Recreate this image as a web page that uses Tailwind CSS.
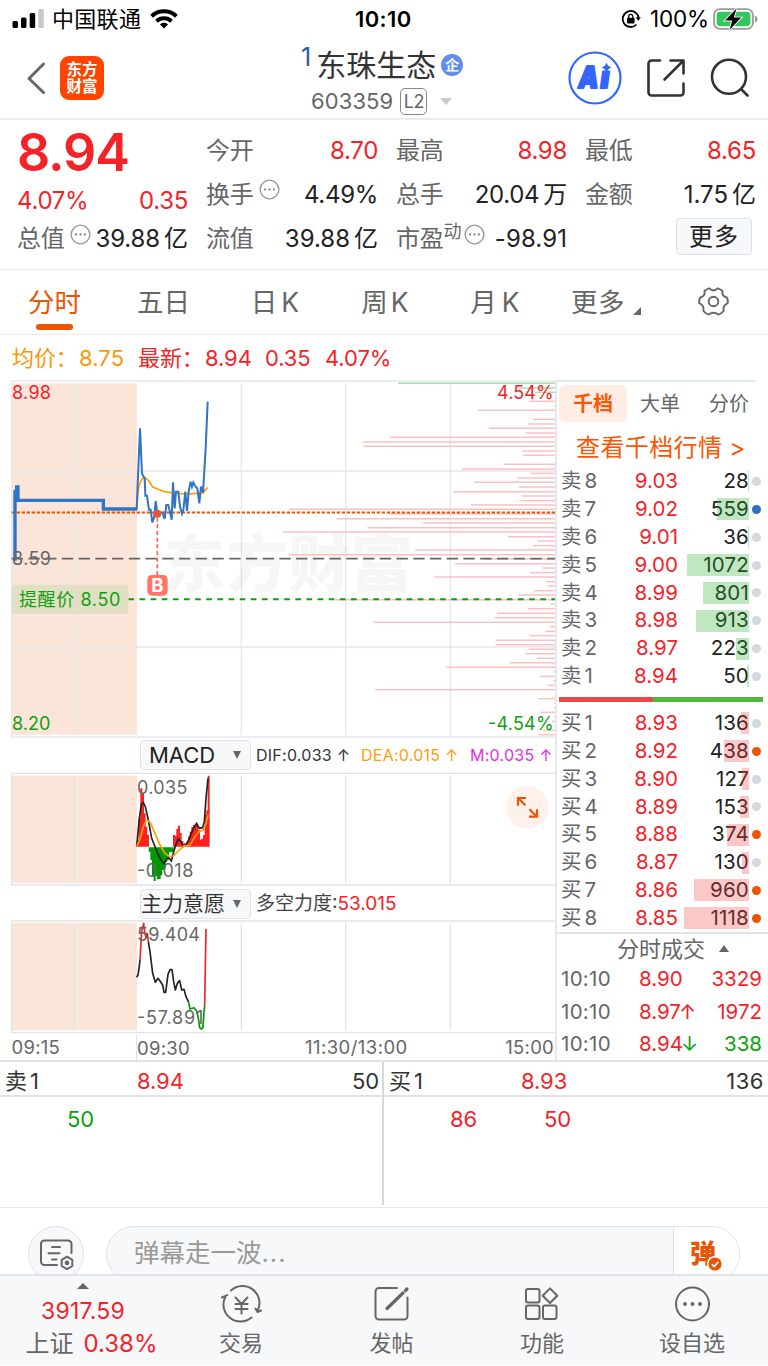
<!DOCTYPE html>
<html lang="zh-CN">
<head>
    <meta charset="utf-8" />
    <title>东珠生态 603359</title>
    <meta name="viewport" content="width=device-width, initial-scale=1.0">
    <script src="https://cdn.jsdelivr.net/npm/@tailwindcss/browser@4"></script>
</head>
<body class="w-[768px] h-[1366px] overflow-hidden bg-white font-['Inter','Noto_Sans_CJK_SC',sans-serif] text-[#666]">

<!-- Shared icons -->
<svg class="hidden">
    <symbol id="dots" viewBox="0 0 22 22">
        <circle cx="11" cy="11" r="9.8" fill="none" stroke="#9a9a9a" stroke-width="1.5"/>
        <circle cx="6.4" cy="11" r="1.2" fill="#888"/><circle cx="11" cy="11" r="1.2" fill="#888"/><circle cx="15.6" cy="11" r="1.2" fill="#888"/>
    </symbol>
</svg>

<!-- Status bar -->
<div class="flex h-[38px] items-center text-black">
    <div class="flex w-[355px] items-center pl-[12px]">
        <svg class="h-[20px] w-[33px]" viewBox="0 0 33 20">
            <rect x="0.5" y="12" width="5.5" height="7" rx="1.6"/><rect x="9" y="8.5" width="5.5" height="10.5" rx="1.6"/><rect x="17.7" y="4" width="5.5" height="15" rx="1.6"/><rect x="26.3" y="0" width="5.5" height="19" rx="1.6" fill="#c8c8c8"/>
        </svg>
        <span class="ml-[7px] text-[22px] leading-none tracking-[0.3px]">中国联通</span>
        <svg class="ml-[9px] h-[20px] w-[28px]" viewBox="0 0 28 20" fill="none" stroke="#000" stroke-width="4">
            <path d="M1.6 7.2C8.6 .7 19.4 .7 26.4 7.2"/><path d="M6.5 12.2c4.300-3.900 10.700-3.900 15 0"/><path d="M14 19.600l-4.200-4.300c2.500-2.100 5.900-2.100 8.400 0z" fill="#000" stroke="none"/>
        </svg>
    </div>
    <span class="w-[266px] text-[22px] font-semibold tracking-[0.4px]">10:10</span>
    <svg class="h-[20px] w-[20px]" viewBox="0 0 20 20" fill="none" stroke="#000" stroke-width="1.8">
        <path d="M17.6 8.700A8 8 0 1 0 15.500 15.500"/><path d="M14.800 8.200h5l-2.500 3.800z" fill="#000" stroke="none"/>
        <rect x="6" y="8.800" width="7.600" height="5.600" rx=".8" fill="#000" stroke="none"/><path d="M7.700 9V7.500a2.100 2.100 0 0 1 4.200 0V9" stroke-width="1.300"/>
    </svg>
    <span class="ml-[9px] w-[63px] whitespace-nowrap text-[22.500px] tracking-[-0.2px]">100%</span>
    <svg class="h-[24px] w-[46px]" viewBox="0 0 46 24">
        <rect x="1" y="2.200" width="39" height="19.600" rx="6" fill="none" stroke="#9b9b9b" stroke-width="1.800"/>
        <rect x="3.600" y="4.800" width="33.800" height="14.400" rx="3.600" fill="#35c759"/>
        <path d="M42 8.500c3.300 1 3.300 6 0 7z" fill="#9b9b9b"/>
        <path d="M23.500 1.500L12 13.500h7.200l-2.700 9.500 11.700-12.400h-7.400z" fill="#000" stroke="#fff" stroke-width="1.800" paint-order="stroke"/>
    </svg>
</div>

<!-- Title bar -->
<header class="flex h-[82px] border-b-2 border-[#ebebed]">
    <div class="flex w-[301px] items-center pl-[26px]">
        <svg class="h-[34px] w-[20px]" viewBox="0 0 20 34" fill="none" stroke="#666" stroke-width="3" stroke-linecap="round" stroke-linejoin="round"><path d="M17.500 3L3 17.500 17.500 31.500"/></svg>
        <div class="ml-[14px] flex h-[44px] w-[44px] flex-col items-center justify-center rounded-[9px] bg-[#ff4400] text-[15.500px] leading-[17.500px] font-bold text-white"><span>东方</span><span>财富</span></div>
    </div>
    <div class="w-[267px]">
        <div class="flex h-[48px] items-center pt-[5px]">
            <span class="mt-[-14px] text-[25px] leading-none text-[#2b5aa8]">1</span>
            <span class="ml-[5px] text-[30px] leading-none text-[#333]">东珠生态</span>
            <span class="ml-[5px] mt-[1px] flex h-[22px] w-[22px] items-center justify-center rounded-full bg-[#5f8de9] text-[14px] leading-none font-bold text-white">企</span>
        </div>
        <div class="flex items-center pl-[10px]">
            <span class="text-[22px] leading-[30px] tracking-[0.1px]">603359</span>
            <span class="ml-[7px] flex h-[27px] w-[27px] items-center justify-center rounded-[5px] border-[1.500px] border-[#888] pt-px text-[18px] leading-none tracking-[-0.5px]">L2</span>
            <span class="ml-[13px] border-x-[6.500px] border-t-[7px] border-x-transparent border-t-[#c9c9c9]"></span>
        </div>
    </div>
    <div class="flex items-center">
        <svg class="h-[54px] w-[54px]" viewBox="0 0 54 54">
            <circle cx="27" cy="27" r="25.500" fill="none" stroke="#3366ff" stroke-width="2.200"/>
            <g transform="translate(5 0) skewX(-8)" font-size="30" font-weight="900" fill="#3366ff" stroke="#3366ff" stroke-width="2.200" stroke-linejoin="round">
                <text x="9.500" y="37" textLength="20" lengthAdjust="spacingAndGlyphs">A</text><text x="31.500" y="37">ı</text>
            </g>
            <path d="M38.500 11.500q1.200 4 5 5-3.800 1-5 5-1.200-4-5-5 3.800-1 5-5z" fill="#3366ff"/>
        </svg>
        <svg class="ml-[24px] h-[40px] w-[40px]" viewBox="0 0 40 40" fill="none" stroke="#333" stroke-width="2.600" stroke-linecap="round" stroke-linejoin="round"><path d="M14 2.500H5.500a3 3 0 0 0-3 3V34.500a3 3 0 0 0 3 3H34.500a3 3 0 0 0 3-3V25.500M18.500 21.500L37 3M24.500 2.500H37.500V15.500"/></svg>
        <svg class="ml-[24px] h-[40px] w-[42px]" viewBox="0 0 42 40" fill="none" stroke="#333" stroke-width="2.600" stroke-linecap="round"><circle cx="19" cy="18.800" r="17"/><path d="M31 31l6.500 6.500"/></svg>
    </div>
</header>

<!-- Quote summary -->
<section class="flex h-[150px] gap-[18px] border-b border-[#ebebed] pr-[12px] pl-[18px] pt-[9px] text-[24px] leading-[44px] tracking-[-0.3px]">
    <div class="w-[171px] pr-[1px]">
        <div class="ml-[-1px] h-[50px] pt-px text-[52px] leading-[46px] font-semibold tracking-[-1.100px] text-[#f52228]">8.94</div>
        <div class="flex h-[44px] justify-between text-[#f52228]"><span class="ml-[-1px]">4.07%</span><span>0.35</span></div>
        <div class="mt-[-6px] flex h-[44px] items-center text-[#222]"><span class="ml-[-1px] text-[#666]">总值</span><svg class="ml-[6px] mt-[-10px] h-[21px] w-[21px]"><use href="#dots"/></svg><span class="ml-auto whitespace-nowrap tracking-[-0.1px]">39.88<span class="ml-[4px]">亿</span></span></div>
    </div>
    <div class="w-[171px] text-[#222]">
        <div class="flex justify-between"><span class="ml-[-1px] text-[#666]">今开</span><span class="text-[#f52228]">8.70</span></div>
        <div class="flex items-center"><span class="ml-[-1px] text-[#666]">换手</span><svg class="ml-[6px] mt-[-11px] h-[21px] w-[21px]"><use href="#dots"/></svg><span class="ml-auto">4.49%</span></div>
        <div class="flex justify-between"><span class="ml-[-1px] text-[#666]">流值</span><span class="tracking-[0px]">39.88<span class="ml-[4px]">亿</span></span></div>
    </div>
    <div class="w-[171px] text-[#222]">
        <div class="flex justify-between"><span class="text-[#666]">最高</span><span class="text-[#f52228]">8.98</span></div>
        <div class="flex justify-between"><span class="text-[#666]">总手</span><span>20.04<span class="ml-[4px]">万</span></span></div>
        <div class="flex items-center"><span class="text-[#666]">市盈</span><span class="mt-[-14px] h-[44px] text-[18px] text-[#666]">动</span><svg class="ml-[3px] mt-[-10px] h-[21px] w-[21px]"><use href="#dots"/></svg><span class="ml-auto tracking-[0.1px]">-98.91</span></div>
    </div>
    <div class="w-[171px] text-[#222]">
        <div class="flex justify-between"><span class="text-[#666]">最低</span><span class="text-[#f52228]">8.65</span></div>
        <div class="flex justify-between"><span class="text-[#666]">金额</span><span class="tracking-[0px]">1.75<span class="ml-[4px]">亿</span></span></div>
        <button class="mt-[1px] ml-auto mr-[4px] flex h-[37px] w-[76px] items-center justify-center rounded-[4px] border border-[#dcdfe6] bg-[#f7f8fa] pt-px tracking-[1px]">更多</button>
    </div>
</section>

<!-- Period tabs -->
<nav class="flex h-[65px] border-b border-[#ebebed] text-[26.500px] leading-[64px]">
    <div class="flex w-[109px] flex-col items-center text-[#ea5504]"><span class="h-[54px]">分时</span><span class="h-[6px] w-[37px] rounded-full bg-[#ea5504]"></span></div>
    <div class="w-[109px] text-center">五日</div>
    <div class="w-[114px] text-center">日<span class="ml-[4px]">K</span></div>
    <div class="w-[106px] text-center">周<span class="ml-[3px]">K</span></div>
    <div class="w-[114px] text-center">月<span class="ml-[5px]">K</span></div>
    <div class="flex w-[145px] items-center pl-[19px]"><span class="tracking-[0.500px]">更多</span><svg class="ml-[8px] mt-[18px] h-[8px] w-[8px]" viewBox="0 0 8 8"><path d="M8 0V8H0z" fill="#666"/></svg></div>
    <svg class="mt-[16px] ml-px h-[31px] w-[31px]" viewBox="0 0 31 31" fill="none" stroke="#666" stroke-width="1.900" stroke-linejoin="round">
        <circle cx="15.500" cy="15.500" r="4.800"/>
        <path d="M11.200 2.300L13.200 3.800Q15.500 4.800 17.800 3.800L19.800 2.300Q22.700 3 24.500 5L24.400 7.700Q24.800 9.800 26.700 10.600L29 11.700Q30 13.600 29.800 17L27.300 18.800Q25.300 20.200 25.600 22.500L25.500 25Q23.200 28 20.300 28.500L17.800 27.200Q15.500 26.200 13.200 27.200L10.700 28.500Q7.800 28 5.500 25L5.400 22.500Q5.700 20.200 3.700 18.800L1.200 17Q1 13.600 2 11.700L4.300 10.600Q6.200 9.800 6.600 7.700L6.500 5Q8.300 3 11.200 2.300z"/>
    </svg>
</nav>

<!-- Latest price line -->
<div class="flex h-[45px] items-center pl-[12px] pt-[2px] text-[22px] tracking-[-0.1px] text-[#f52228]">
    <span class="w-[67px] text-[#fb9608]">均价：</span><span class="w-[59px] tracking-[0.1px] text-[#fb9608]">8.75</span>
    <span class="w-[67px]">最新：</span><span class="w-[60px]">8.94</span><span class="w-[60px]">0.35</span><span>4.07%</span>
</div>

<main class="flex h-[682px] border-b-2 border-[#dfe2e8]">
    <!-- Charts, three drawing units per pixel -->
    <div class="w-[555px]">
        <svg class="block h-[358px] w-[555px]" viewBox="0 15 1665 1074" fill="none">
            <rect x="35" y="25" width="376" height="1054" fill="#fbe5d9"/>
            <g stroke="#e4e8ef" stroke-width="4">
                <path d="M33 18H1665M33 1086H1665M35 18V1086M35 288H1665M35 816H1665M223 25V1079M724 25V1079M1037 25V1079M1351 25V1079"/>
            </g>
            <text x="490" y="635" font-size="186" font-weight="900" fill="#000" fill-opacity=".035" textLength="749">东方财富</text>
            <g id="volumes" stroke-width="4.500"></g>
            <path d="M35 412.500H1665" stroke="#ea5504" stroke-width="5.500" stroke-dasharray="10 5"/>
            <path d="M35 551H1665" stroke="#666" stroke-width="5.500" stroke-dasharray="34 16.200"/>
            <path d="M385 673H1665" stroke="#0ea10e" stroke-width="6" stroke-dasharray="17 16.400"/>
            <path d="M410 400L416 335 424 315 430 308 438 310 447 318 458 336 475 343 490 349 520 354 560 357 580 356 610 354 615 345 623 338" stroke="#ff9d0a" stroke-width="5"/>
            <path d="M40 552H45V350H50V336H54V376H310V402H412" stroke="#2f74c5" stroke-width="10"/>
            <path d="M410 402L420 160 426 296 434 310 436 362 441 362 447 404 452 404 457 442 463 425 467 378 472 416 487 412 494 432 499 390 505 390 510 412 515 434 519 322 524 400 528 350 535 350 540 395 546 416 550 405 556 350 561 408 566 350 572 320 576 335 580 322 586 334 592 340 598 385 603 335 609 352 617 220 623 80" stroke="#2f74c5" stroke-width="6"/>
            <circle cx="472" cy="416" r="12" fill="#e85340"/>
            <path d="M472 428V600" stroke="#f56558" stroke-width="5" stroke-dasharray="12 8"/>
            <rect x="442" y="600" width="61" height="62" rx="14" fill="#ff7566"/>
            <text x="472.500" y="651" font-size="56" font-weight="700" fill="#fff" text-anchor="middle">B</text>
            <rect x="35" y="629" width="350" height="88" rx="8" fill="#e1dfc4"/>
            <g font-size="54">
                <text x="57" y="694" fill="#0ea10e" textLength="304">提醒价 8.50</text>
                <text x="36" y="72" fill="#f52228" textLength="117">8.98</text>
                <text x="36" y="570" fill="#666" textLength="117">8.59</text>
                <text x="36" y="1064" fill="#0ea10e" textLength="115">8.20</text>
                <text x="1491" y="72" fill="#f52228" textLength="170">4.54%</text>
                <text x="1464" y="1064" fill="#0ea10e" textLength="197">-4.54%</text>
            </g>
        </svg>

        <div class="flex h-[34px] items-center pl-[140px] text-[16px] tracking-[0.250px] whitespace-nowrap">
            <div class="flex h-[30px] w-[111px] items-center rounded-[4px] border-[1.500px] border-[#dfe2e8] bg-[#f7f8fa] pl-[8px] text-[22px] tracking-[0px] text-[#222]"><span>MACD</span><span class="ml-auto mr-[9px] border-x-[4.500px] border-t-[8px] border-x-transparent border-t-[#666]"></span></div>
            <span class="ml-[5px] w-[105px] text-[#333]">DIF:0.033 ↑</span>
            <span class="w-[109px] text-[#ff9d0a]">DEA:0.015 ↑</span>
            <span class="text-[#e42be8]">M:0.035 ↑</span>
        </div>

        <svg class="block h-[115px] w-[555px]" viewBox="0 111 1665 345" fill="none">
            <rect x="35" y="122" width="376" height="322" fill="#fbe5d9"/>
            <path d="M33 115H1665M33 450H1665M35 115V450M223 122V444M724 122V444M1037 122V444M1351 122V444" stroke="#e0e3ea" stroke-width="4"/>
            <path d="M414 335V315M419 335V250M424 335V160M429 335V175M434 335V235M439 335V275M444 335V300M522 335V300M527 335V303M532 335V282M537 335V272M542 335V294M547 335V318M552 335V325M557 335V325M562 335V322M567 335V305M572 335V290M577 335V276M582 335V270M587 335V266M592 335V270M597 335V286M602 335V314M607 335V312M612 335V300M617 335V240M622 335V226M626 335V122" stroke="#ff2020" stroke-width="6"/>
            <path d="M449 337V350M454 337V375M459 337V425M464 337V438M469 337V424M474 337V433M479 337V432M484 337V420M489 337V405M494 337V400M499 337V380M504 337V374M509 337V352M514 337V352M518 337V350" stroke="#009a00" stroke-width="6"/>
            <path d="M410 335L418 250 424 208 430 203 436 215 445 255 455 310 465 335 475 360 485 378 492 386 500 372 506 368 514 378 520 355 527 330 535 312 543 320 550 335 558 330 568 310 578 285 590 265 598 280 608 278 613 260 618 190 624 130" stroke="#222" stroke-width="5"/>
            <path d="M410 335L420 312 430 275 438 258 445 257 452 265 465 295 480 330 495 355 508 364 520 363 535 348 550 334 570 330 585 305 597 290 610 285 618 265 624 240" stroke="#ff9d0a" stroke-width="5"/>
            <g font-size="54" fill="#666">
                <text x="411" y="176" textLength="151">0.035</text>
                <text x="411" y="426" textLength="169">-0.018</text>
            </g>
            <!-- Expand button -->
            <circle cx="1582" cy="217" r="64" fill="#fef1eb"/>
            <path d="M1554 212V189H1578M1555 190L1576 211M1611 223V245H1587M1610 244L1588 223" stroke="#ea5504" stroke-width="6.500"/>
        </svg>

        <div class="flex h-[33px] items-center pl-[140px] whitespace-nowrap">
            <div class="flex h-[30px] w-[111px] items-center rounded-[4px] border-[1.500px] border-[#dfe2e8] bg-[#f7f8fa] text-[21px] text-[#333]"><span>主力意愿</span><span class="ml-auto mr-[9px] border-x-[4.500px] border-t-[8px] border-x-transparent border-t-[#666]"></span></div>
            <span class="ml-[5px] pt-px text-[19px] text-[#444]">多空力度:<span class="text-[#f52228]">53.015</span></span>
        </div>

        <svg class="block h-[114px] w-[555px]" viewBox="0 555 1665 342" fill="none">
            <rect x="35" y="564" width="376" height="322" fill="#fbe5d9"/>
            <path d="M33 558H1665M33 893H1665M35 558V893M223 564V886M724 564V886M1037 564V886M1351 564V886" stroke="#e0e3ea" stroke-width="4"/>
            <g stroke-width="5" stroke-linejoin="round">
                <path d="M410 727L414 720 417 700 420 675M445 620L450 650 458 715 466 742 474 730 480 738 488 750 492 772 497 772 504 718 510 704 516 704 521 740 526 765 532 745 539 737 545 765 552 763 558 785 566 802" stroke="#222"/>
                <path d="M420 675L425 590 431 565 434 590 438 608 442 595 445 620M614 812L618 582" stroke="#f52228"/>
                <path d="M566 802L570 822 582 818 590 828 595 850 599 878 604 882 609 878 612 830 614 812" stroke="#009a00"/>
            </g>
            <g font-size="54" fill="#666">
                <text x="411" y="618" textLength="189">59.404</text>
                <text x="411" y="868" textLength="199">-57.891</text>
            </g>
        </svg>

        <div class="flex h-[27px] items-center pt-px text-[18.500px] tracking-[0.250px]">
            <span class="w-[136px] pl-[11.500px]">09:15</span>
            <span class="mt-[-1px] h-[27px] w-[169px] border-l border-[#dfe2e8] leading-[28px]">09:30</span>
            <span class="tracking-[0.450px]">11:30/13:00</span>
            <span class="ml-auto mr-px">15:00</span>
        </div>
    </div>

    <!-- Order book -->
    <aside class="w-[213px] border-l-2 border-[#e4e8ef]">
        <div class="mr-[12px] flex h-[42px] border-t-2 border-[#e4e8ef] pt-[3px] pl-[2px] text-[20px] leading-[38px]">
            <span class="h-[37px] w-[68px] rounded-[6px] bg-[#ffece3] text-center font-bold text-[#ff5500]">千档</span>
            <span class="w-[66px] text-center">大单</span>
            <span class="ml-auto mr-[7px]">分价</span>
        </div>
        <div class="h-[45.500px] pl-[19px] text-[24px] leading-[51px] whitespace-nowrap text-[#ff5500] tracking-[0.400px]">查看千档行情 <span>&gt;</span></div>
        <div id="asks"></div>
        <div class="mt-[7px] mb-[7px] ml-[2px] h-[5px] w-[204px] bg-linear-110 from-[#ea4848] from-46% to-[#52b83c] to-46%"></div>
        <div id="bids"></div>
        <div class="flex h-[31px] items-center border-t-2 border-[#e0e3ea] pl-[60px] text-[22px] leading-none"><span>分时成交</span><span class="ml-[14px] border-x-[5px] border-b-[7px] border-x-transparent border-b-[#666]"></span></div>
        <div id="trades"></div>
    </aside>
</main>

<!-- Best ask / best bid queue -->
<section class="flex h-[146px] border-b border-[#e4e8ef] text-[22px] tracking-[-0.1px]">
    <div class="h-[143px] w-[384px] border-r-2 border-[#d5d8de]">
        <div class="flex h-[35px] items-center border-b-2 border-[#dfe2e8] pt-[5px] pl-[5px] pr-[3px] leading-none text-[#333]"><span class="w-[132px]">卖<span class="ml-[3px]">1</span></span><span class="text-[#f52228]">8.94</span><span class="ml-auto">50</span></div>
        <div class="pl-[67px] leading-[44px] text-[#0ea10e]">50</div>
    </div>
    <div class="h-[143px] w-[384px]">
        <div class="flex h-[35px] items-center border-b-2 border-[#dfe2e8] pt-[5px] pl-[5px] pr-[4px] leading-none text-[#333]"><span class="w-[132px]">买<span class="ml-[3px]">1</span></span><span class="text-[#f52228]">8.93</span><span class="ml-auto tracking-[0.500px]">136</span></div>
        <div class="flex pl-[66px] leading-[44px] text-[#f52228]"><span class="w-[94px]">86</span><span>50</span></div>
    </div>
</section>

<!-- Comment bar -->
<section class="flex h-[66px] overflow-hidden pt-[18px] pl-[28px]">
    <div class="flex h-[56px] w-[56px] shrink-0 items-center justify-center rounded-full border border-[#dfe2e8] bg-[#f7f8fa]">
        <svg class="h-[32px] w-[35px]" viewBox="0 0 35 32" fill="none" stroke="#666" stroke-width="2" stroke-linecap="round" stroke-linejoin="round">
            <path d="M18 27H5.500a3.500 3.500 0 0 1-3.500-3.500V6A3.500 3.500 0 0 1 5.500 2.500H29A3.500 3.500 0 0 1 32.500 6V15M13 9h8M9.500 15.300h11M13 21.500h4.500"/>
            <path d="M28 18.700l5.300 3.100v6.200L28 31.100 22.700 28V21.800z"/><circle cx="28" cy="24.900" r="1.300" fill="#666"/>
        </svg>
    </div>
    <div class="ml-[22px] flex h-[56px] w-[634px] shrink-0 overflow-hidden rounded-full border border-[#dfe2e8] bg-[#f7f8fa]">
        <span class="w-[566px] pl-[27px] text-[25.500px] leading-[51px] text-[#999]">弹幕走一波<span class="tracking-[1px]">...</span></span>
        <div class="flex-1 border-l border-[#dfe2e8] bg-white">
            <div class="relative ml-[16px] h-[52px] w-[32px] text-[26px] leading-[53px] font-black text-[#ea5504]">弹
                <svg class="absolute top-[29px] left-[17px] h-[16px] w-[16px]" viewBox="0 0 16 16"><circle cx="8" cy="8" r="7.300" fill="#ea5504" stroke="#fff" stroke-width="1.400"/><path d="M4.800 8.200l2.300 2.300 4.200-4.600" fill="none" stroke="#fff" stroke-width="1.600"/></svg>
            </div>
        </div>
    </div>
</section>

<!-- Bottom navigation -->
<footer class="flex h-[91px] border-t-2 border-[#e0e3e8] bg-[#f7f8fa] text-[22px] leading-[30px]">
    <div class="flex w-[166px] flex-col items-center text-[#f52228]">
        <span class="mt-[7px] border-x-[6.500px] border-b-[6.500px] border-x-transparent border-b-[#666]"></span>
        <span class="mt-[7px] text-[23px] leading-[30px] tracking-[0.2px]">3917.59</span>
        <span class="mt-[3px] ml-[17px] text-[24px] whitespace-nowrap"><span class="mr-[10px] text-[#666]">上证</span>0.38%</span>
    </div>
    <div class="flex w-[150px] flex-col items-center">
        <svg class="mt-[9px] h-[38px] w-[42px]" viewBox="0 0 42 38" fill="none" stroke="#666" stroke-width="2" stroke-linecap="round" stroke-linejoin="round">
            <path d="M11 5.500A17 17 0 0 1 37.500 26M37.500 27l-2-3.500M37.500 27l3.500-1.500M31.500 32.500A17 17 0 0 1 5.500 11.500M5.500 11l-3.500 1.500M5.500 11l1.800-1"/>
            <path d="M15.500 12.500l6 6.500 6-6.500M15.500 19h12M15.500 24h12M21.500 19V28.500"/>
        </svg>
        <span class="mt-[5px]">交易</span>
    </div>
    <div class="flex w-[151px] flex-col items-center">
        <svg class="mt-[9px] h-[38px] w-[38px]" viewBox="0 0 38 38" fill="none" stroke="#666" stroke-width="2" stroke-linecap="round">
            <path d="M24 3H6A3.500 3.500 0 0 0 2.500 6.500V31A3.500 3.500 0 0 0 6 34.500H31A3.500 3.500 0 0 0 34.500 31V12.500"/><path d="M14 23.500L30 8M32.500 5.500L34 4" stroke-width="3.200"/>
        </svg>
        <span class="mt-[5px]">发帖</span>
    </div>
    <div class="flex w-[150px] flex-col items-center">
        <svg class="mt-[9px] h-[38px] w-[36px]" viewBox="0 0 36 38" fill="none" stroke="#666" stroke-width="2" stroke-linejoin="round">
            <rect x="2" y="4" width="13.500" height="13.500" rx="2"/><rect x="2" y="20.500" width="13.500" height="13.500" rx="2"/><rect x="19" y="20.500" width="13.500" height="13.500" rx="2"/><path d="M26 3.400l7.300 7.300-7.300 7.300-7.300-7.300z"/>
        </svg>
        <span class="mt-[5px]">功能</span>
    </div>
    <div class="flex w-[150px] flex-col items-center">
        <svg class="mt-[9px] h-[38px] w-[36px]" viewBox="0 0 36 38" fill="none" stroke="#666" stroke-width="2">
            <circle cx="18.500" cy="19" r="16.500"/><g fill="#666" stroke="none"><circle cx="11" cy="19" r="1.900"/><circle cx="18.500" cy="19" r="1.900"/><circle cx="26" cy="19" r="1.900"/></g>
        </svg>
        <span class="mt-[5px]">设自选</span>
    </div>
</footer>

<script>
    // [label, price, quantity, bar width, dot class]
    const GREY = "bg-[#d3d7de]", BLUE = "bg-[#2f6fc4]", ORANGE = "bg-[#ea5504]";
    const asks = [
        ["卖8", "9.03", 28, 1, GREY], ["卖7", "9.02", 559, 32.5, BLUE], ["卖6", "9.01", 36, 1.5, GREY], ["卖5", "9.00", 1072, 62, GREY],
        ["卖4", "8.99", 801, 46.5, GREY], ["卖3", "8.98", 913, 53, GREY], ["卖2", "8.97", 223, 13, GREY], ["卖1", "8.94", 50, 2.5, GREY]
    ];
    const bids = [
        ["买1", "8.93", 136, 8, GREY], ["买2", "8.92", 438, 25.5, ORANGE], ["买3", "8.90", 127, 7, GREY], ["买4", "8.89", 153, 9, GREY],
        ["买5", "8.88", 374, 22, ORANGE], ["买6", "8.87", 130, 7.5, GREY], ["买7", "8.86", 960, 55.5, ORANGE], ["买8", "8.85", 1118, 65, ORANGE]
    ];

    function bookRow([label, price, qty, width, dot], barClass) {
        return `<div class="flex h-[27.860px] items-center pl-[4px] text-[20.500px] leading-none tracking-[0px]">
            <span class="w-[50px]">${label.charAt(0)}<span class="ml-[3px]">${label.charAt(1)}</span></span>
            <span class="w-[67px] text-right text-[#f52228]">${price}</span>
            <span class="relative flex h-[22px] w-[71px] items-center justify-end tracking-[0.2px] text-[#222]">${qty}<span class="absolute top-0 right-0 h-[22px] ${barClass}" style="width:${width}px"></span></span>
            <span class="ml-[3px] h-[9px] w-[9px] rounded-full ${dot}"></span>
        </div>`;
    }
    document.getElementById("asks").innerHTML = asks.map(r => bookRow(r, "bg-[#2eb42e]/30")).join("");
    document.getElementById("bids").innerHTML = bids.map(r => bookRow(r, "bg-[#f54545]/30")).join("");

    const trades = [
        ["8.90", "", 3329, "text-[#f52228]"], ["8.97", "↑", 1972, "text-[#f52228]"], ["8.94", "↓", 338, "text-[#0ea10e]"]
    ];
    document.getElementById("trades").innerHTML = trades.map(([price, arrow, qty, color]) =>
        `<div class="flex h-[32.600px] items-center pl-[4px] pr-[6px] text-[20.500px] leading-none">
            <span class="w-[78px] tracking-[0.3px]">10:10</span><span class="text-[#f52228]">${price}</span><span class="ml-[-2px] ${color}">${arrow}</span><span class="ml-auto ${color}">${qty}</span>
        </div>`).join("");

    // Volume by price: [y, length from the right edge]
    const volumes = [
        [79,77],[93,3],[106,230],[133,66],[147,80],[160,199],[174,88],[187,495],[201,577],[214,574],[228,98],[241,95],[268,153],[282,279],[295,72],[309,113],[322,243],[336,108],[350,306],[363,99],[377,107],[390,252],
        [403,798],[416,497],[431,656],[444,396],[458,563],[471,816],[485,141],[498,53],[512,65],[525,419],[539,798],[552,210],[566,300],[579,38],[593,75],[606,360],[620,27],[633,20],[647,63],[660,108],[674,660],[687,12],
        [701,82],[715,174],[728,181],[742,543],[755,16],[769,29],[782,77],[796,177],[809,179],[823,77],[836,90],[850,54],[863,135],[877,326],[890,4],[904,45],[917,5],[931,23],[944,540],[971,50],[985,3],[998,3],[1012,45],[1025,3],[1039,9],[1066,37],[1079,49]
    ];
    const line = (y, len, color) => `<path d="M${1665 - len} ${y}H1665" stroke="${color}"/>`;
    document.getElementById("volumes").innerHTML =
        [[25, 471], [39, 108], [52, 60]].map(([y, l]) => line(y, l, "#a9dda9")).join("") +
        volumes.map(([y, l]) => line(y, l, "#fbc0c0")).join("");
</script>
</body>
</html>
